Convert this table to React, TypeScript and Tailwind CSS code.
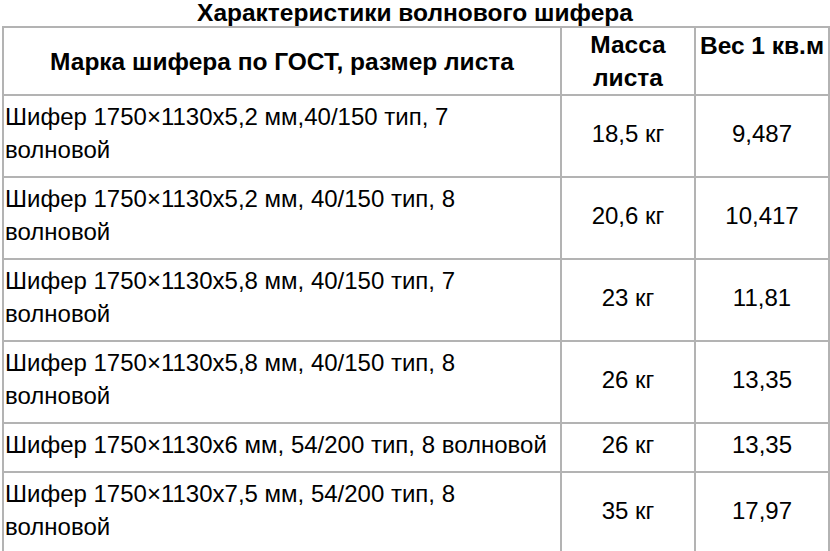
const rows = [
  { name: "Шифер 1750×1130х5,2 мм,40/150 тип, 7 волновой", mass: "18,5 кг", weight: "9,487" },
  { name: "Шифер 1750×1130х5,2 мм, 40/150 тип, 8 волновой", mass: "20,6 кг", weight: "10,417" },
  { name: "Шифер 1750×1130х5,8 мм, 40/150 тип, 7 волновой", mass: "23 кг", weight: "11,81" },
  { name: "Шифер 1750×1130х5,8 мм, 40/150 тип, 8 волновой", mass: "26 кг", weight: "13,35" },
  { name: "Шифер 1750×1130х6 мм, 54/200 тип, 8 волновой", mass: "26 кг", weight: "13,35" },
  { name: "Шифер 1750×1130х7,5 мм, 54/200 тип, 8 волновой", mass: "35 кг", weight: "17,97" },
];

export default function App() {
  return (
    <div className="w-[830px] h-[551px] bg-white text-black overflow-hidden font-['Liberation_Sans',Arial,sans-serif]">
      <h1 className="text-center font-bold text-[24.5px] leading-[24px] h-[26px] pt-[1px]">Характеристики волнового шифера</h1>
      <table className="ml-[2px] w-[826px] border-collapse table-fixed">
        <colgroup>
          <col className="w-[558px]" />
          <col className="w-[134px]" />
          <col className="w-[134px]" />
        </colgroup>
        <thead>
          <tr className="h-[66px] text-[24.5px] leading-[33px] font-bold">
            <th className="border-2 border-[#b3b3b3] align-middle text-center">Марка шифера по ГОСТ, размер листа</th>
            <th className="border-2 border-[#b3b3b3] align-middle text-center">Масса листа</th>
            <th className="border-2 border-[#b3b3b3] align-top pt-[1px] px-0 text-center whitespace-nowrap">Вес 1 кв.м</th>
          </tr>
        </thead>
        <tbody className="text-[24px] leading-[33px]">
          {rows.map((r, i) => (
            <tr key={i}>
              <td className="border-2 border-[#b3b3b3] pl-[1px] pr-0 pt-[4px] pb-[10px] align-top">{r.name}</td>
              <td className="border-2 border-[#b3b3b3] pt-[4px] pb-[10px] text-center align-middle">{r.mass}</td>
              <td className="border-2 border-[#b3b3b3] pt-[4px] pb-[10px] text-center align-middle">{r.weight}</td>
            </tr>
          ))}
        </tbody>
      </table>
    </div>
  );
}
